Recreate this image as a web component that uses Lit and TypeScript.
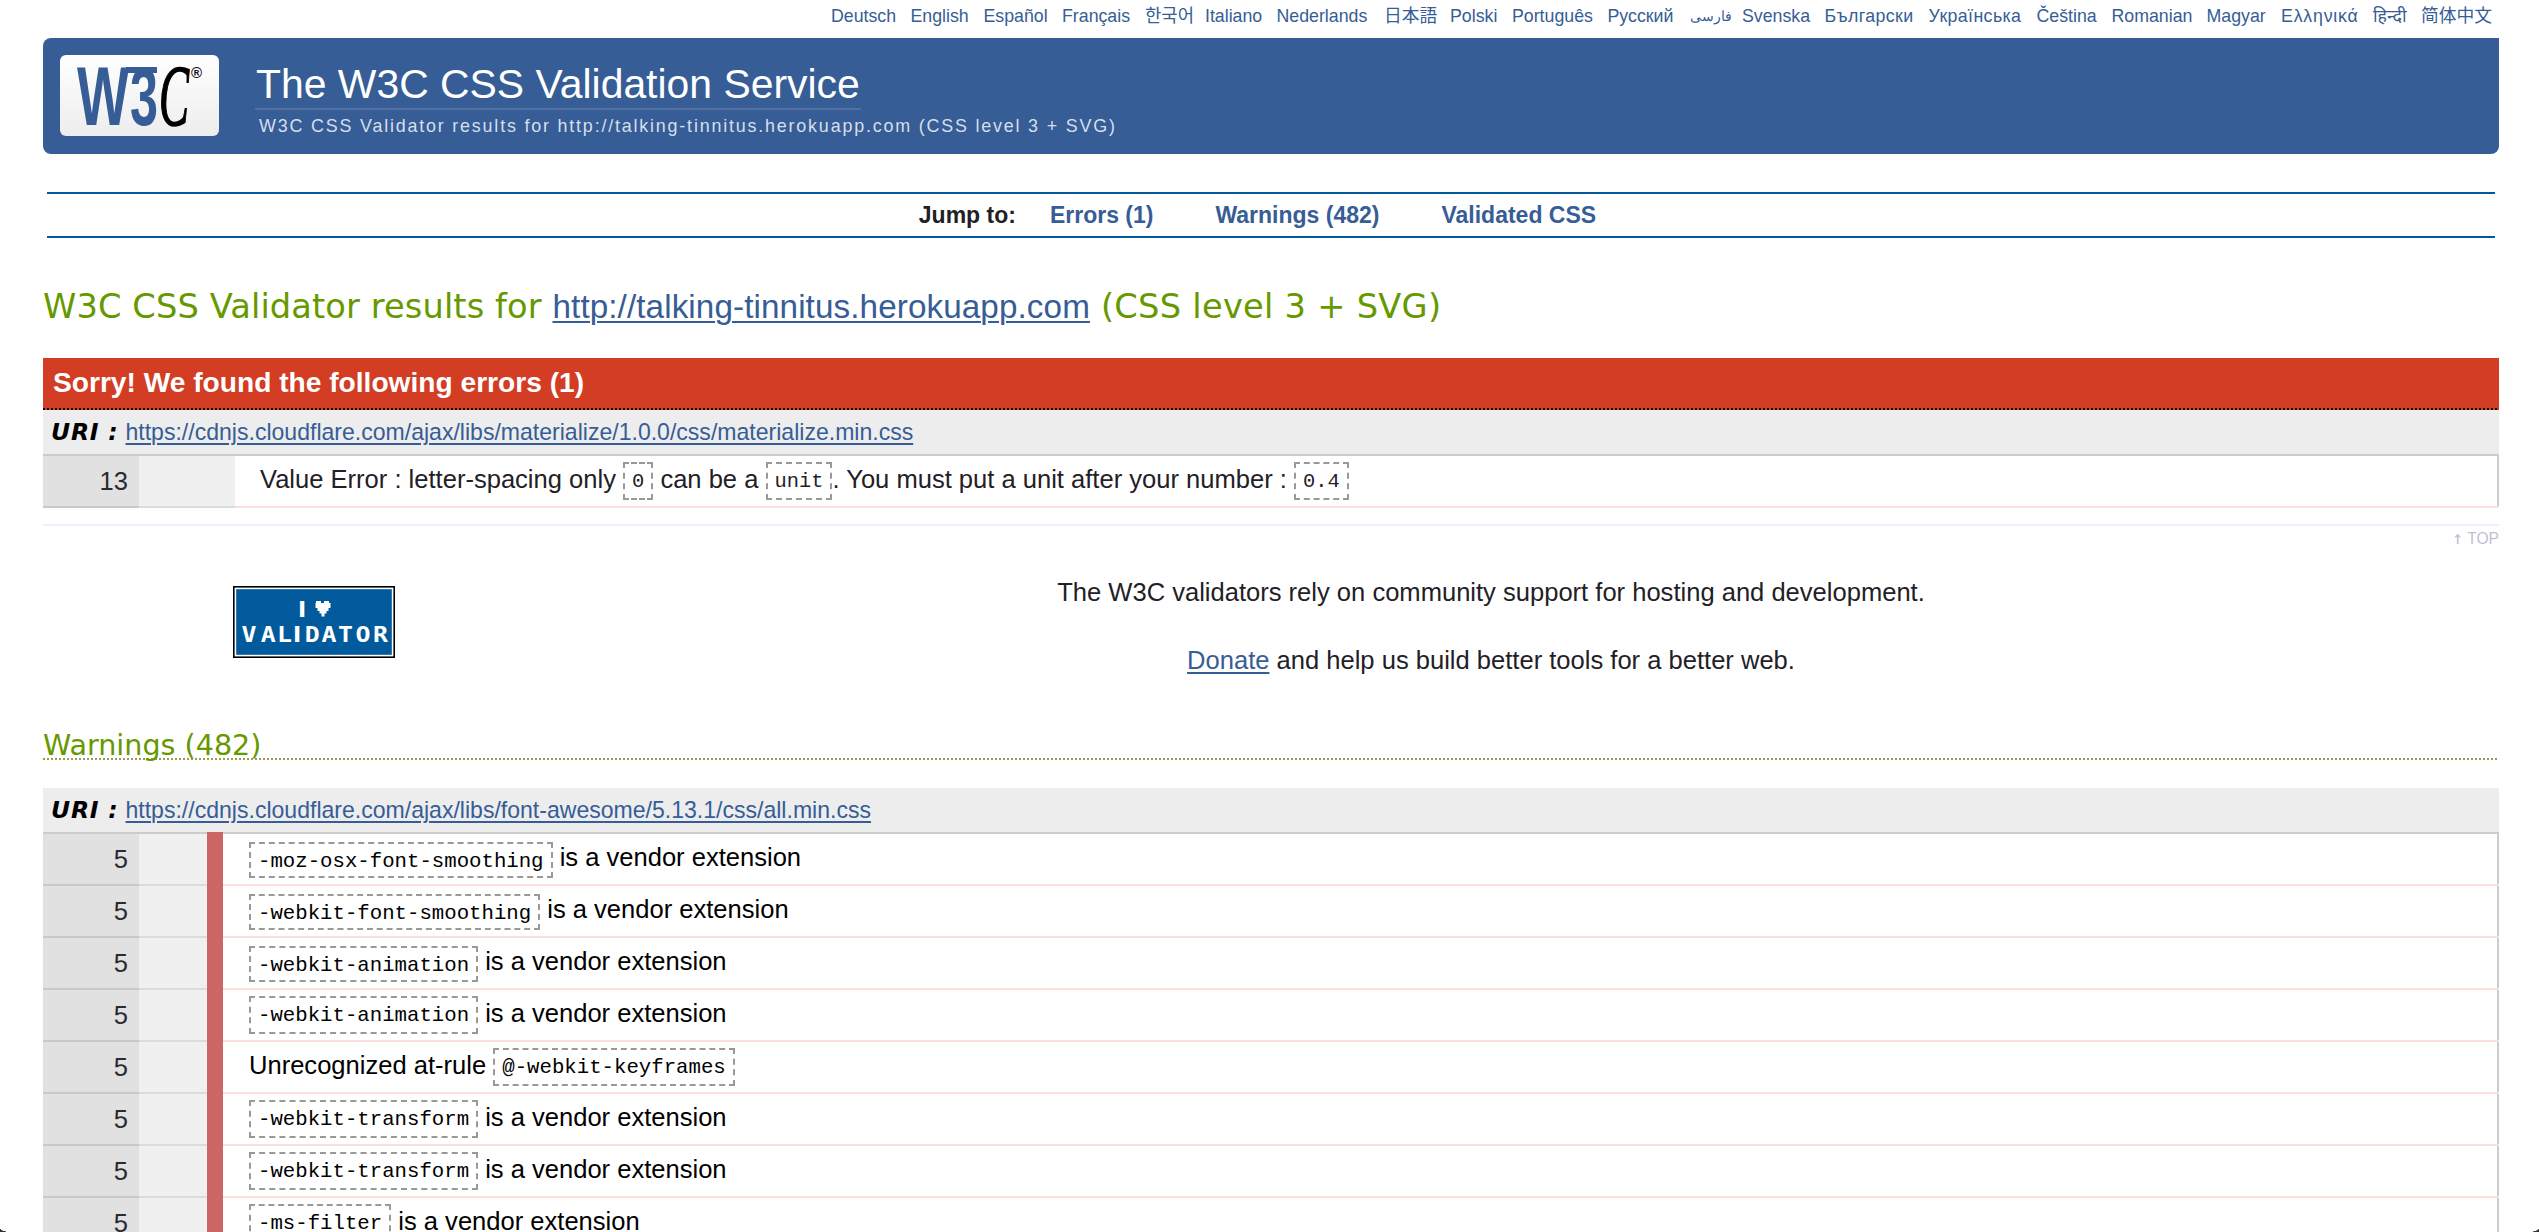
import { LitElement, html, css, svg } from "lit";
import { customElement, property } from "lit/decorators.js";
import { classMap } from "lit/directives/class-map.js";

/** Label, the width of its slot in the language bar, and an optional script class. */
const LANGUAGES: [string, number, string?][] = [
  ["Deutsch", 79.5], ["English", 73], ["Español", 78.5], ["Français", 83],
  ["한국어", 60], ["Italiano", 71.5], ["Nederlands", 107.5], ["日本語", 66],
  ["Polski", 62], ["Português", 95.5], ["Русский", 82.5], ["فارسی", 52, "arabic"],
  ["Svenska", 82.5], ["Български", 104, "wide"], ["Українська", 108, "wide"], ["Čeština", 75],
  ["Romanian", 95], ["Magyar", 74.5], ["Ελληνικά", 92, "wider"], ["हिन्दी", 48], ["简体中文", 72],
];

interface Warning {
  line: number;
  before?: string;
  code: string;
  after?: string;
  low?: boolean;
}

const VENDOR = " is a vendor extension";
const WARNINGS: Warning[] = [
  { line: 5, code: "-moz-osx-font-smoothing", after: VENDOR, low: true },
  { line: 5, code: "-webkit-font-smoothing", after: VENDOR, low: true },
  { line: 5, code: "-webkit-animation", after: VENDOR, low: true },
  { line: 5, code: "-webkit-animation", after: VENDOR },
  { line: 5, before: "Unrecognized at-rule ", code: "@-webkit-keyframes" },
  { line: 5, code: "-webkit-transform", after: VENDOR },
  { line: 5, code: "-webkit-transform", after: VENDOR },
  { line: 5, code: "-ms-filter", after: VENDOR },
];

@customElement("w3c-logo")
export class W3cLogo extends LitElement {
  static styles = css`
    :host { display: block; width: 159px; height: 81px; }
    .logo { display: block; }
    .w { font: 700 83px "Liberation Sans", sans-serif; fill: #365d95; }
    .three { font: 700 82px "Liberation Sans", sans-serif; fill: #365d95; }
    .c { font: italic 400 86px "Liberation Serif", serif; fill: #000; stroke: #000; stroke-width: 1.6; }
    .r { font: 700 15px "Liberation Sans", sans-serif; fill: #111; }
  `;
  render() {
    return html`<svg class="logo" width="159" height="81" viewBox="0 0 159 81" role="img" aria-label="W3C">
      <defs>
        <linearGradient id="plate" x1="0" y1="0" x2="0" y2="1">
          <stop offset="0" stop-color="#fff" /><stop offset="1" stop-color="#ededed" />
        </linearGradient>
      </defs>
      <rect width="159" height="81" rx="6" fill="url(#plate)" />
      <text class="w" x="17" y="70" textLength="52" lengthAdjust="spacingAndGlyphs">W</text>
      <text class="three" x="70" y="70" textLength="28" lengthAdjust="spacingAndGlyphs">3</text>
      <rect x="66" y="12" width="31" height="6" fill="#365d95" />
      <text class="c" x="99" y="70" textLength="30" lengthAdjust="spacingAndGlyphs">C</text>
      <text class="r" x="131" y="23">®</text>
    </svg>`;
  }
}

@customElement("validator-badge")
export class ValidatorBadge extends LitElement {
  static styles = css`
    :host { display: block; width: 162px; height: 72px; }
    .badge { display: block; }
    .pix { font: 700 22px "DejaVu Sans Mono", monospace; fill: #fff; text-anchor: middle; }
    .bar { font: 700 22px "DejaVu Sans", sans-serif; fill: #fff; text-anchor: middle; }
  `;
  render() {
    const word = [..."VALIDATOR"];
    const centers = [16, 35.2, 51.5, 64.2, 79.2, 96, 112.5, 130, 147.5];
    return html`<svg class="badge" width="162" height="72" viewBox="0 0 162 72">
      <rect width="162" height="72" fill="#000" />
      <rect x="1.6" y="1.6" width="158.8" height="68.8" fill="#fff" />
      <rect x="3.2" y="3.2" width="155.6" height="65.6" fill="#005a9c" />
      <text class="bar" x="69" y="31">I</text>
      <path fill="#fff" d="M83 15h5v2h3v-2h5v2h1.500v5h-2v3h-2v2.500h-2v3h-3v-3h-2v-2.500h-2v-3h-2v-5h0.500z" />
      ${word.map((ch, i) => ch === "I"
        ? svg`<text class="bar" x=${centers[i]} y="56">${ch}</text>`
        : svg`<text class="pix" x=${centers[i]} y="56" textLength="15" lengthAdjust="spacingAndGlyphs">${ch}</text>`)}
    </svg>`;
  }
}

@customElement("result-row")
export class ResultRow extends LitElement {
  @property({ type: Number }) line = 0;
  @property({ type: Boolean }) warning = false;

  static styles = css`
    :host { display: grid; grid-template-columns: 96px 96px 1fr; height: 52px; }
    :host([warning]) { grid-template-columns: 96px 68px 16px 1fr; color: #000; }
    .num { box-sizing: border-box; background: #e1e1e1; border-bottom: 2px solid #c8c8c8; text-align: right;
      padding-right: 11px; line-height: 51px; color: #2a2b30; height: 52px; }
    .ctx { box-sizing: border-box; background: #f0f0f0; border-bottom: 2px solid #dcdcdc; }
    .stripe { background: #c66; margin-top: -2px; }
    .body { display: grid; grid-template-rows: 50px 2px; }
    .msg { display: flex; align-items: flex-start; white-space: pre; padding-left: 25px;
      border-right: 2px solid #ccc; line-height: 47px; }
    :host([warning]) .msg { padding-left: 26px; }
    .rule { background: #fdd; }
  `;
  render() {
    return html`<div class="num">${this.line}</div><div class="ctx"></div>
      ${this.warning ? html`<div class="stripe"></div>` : ""}
      <div class="body"><div class="msg"><slot></slot></div><div class="rule"></div></div>`;
  }
}

@customElement("app-root")
export class AppRoot extends LitElement {
  static styles = css`
    :host { display: block; position: relative; box-sizing: border-box; width: 100%; height: 1232px; overflow: hidden;
      background: #fff; padding: 0 40px 0 43px; color: #1f2126;
      font: 25.55px "Liberation Sans", "Noto Sans CJK SC", sans-serif; }
    a { color: #365d95; text-decoration-thickness: 2px; text-underline-offset: 3px; }
    .langs { display: flex; justify-content: flex-end; height: 38px; line-height: 32px; padding-right: 6px; }
    .langs a { flex: none; white-space: nowrap; font-size: 17.75px; text-decoration: none;
      font-family: "Liberation Sans", "Noto Sans CJK KR", "Noto Sans", sans-serif; }
    .langs .arabic { font-size: 14px; }
    .langs .wide { letter-spacing: .4px; }
    .langs .wider { letter-spacing: .8px; }
    .banner { display: flex; height: 116px; background: #365d95; border-radius: 8px 0 8px 8px; }
    .banner w3c-logo { margin: 17px 36px 0 17px; }
    .titles { padding-top: 22px; }
    .title { width: 604px; padding-left: 1px; padding-right: 1px; height: 48px; line-height: 48px; font-size: 40.9px; font-weight: 400;
      color: #fff; margin: 0; border-bottom: 2px solid #5070a2; white-space: nowrap; }
    .tagline { margin: 1px 0 0 4px; font-size: 17.9px; line-height: 30px; letter-spacing: 1.81px; color: #d5dfee; white-space: nowrap; }
    .jump { display: flex; box-sizing: border-box; margin: 38px 4px 0; height: 46px; line-height: 42px;
      border: 2px solid #005a9c; border-width: 2px 0; font-size: 23px; font-weight: 700; padding-left: 871.8px; }
    .jump a { text-decoration: none; margin-left: 62px; }
    .jump a:first-of-type { margin-left: 34px; }
    .green { font-family: "DejaVu Sans", sans-serif; color: #690; font-weight: 400; margin: 0; }
    .results { height: 120px; box-sizing: border-box; padding-top: 17px; line-height: 104px; font-size: 33.7px; letter-spacing: .09px; white-space: nowrap; }
    .results a { font: 33.25px "Liberation Sans", sans-serif; }
    .tail { letter-spacing: .25px; }
    .sorry { margin: 0; height: 52px; box-sizing: border-box; padding-left: 10px; line-height: 49px; font-size: 28.15px; color: #fff;
      background: repeating-linear-gradient(90deg, #000 0 2px, #d23d24 2px 4px) bottom / 100% 2px no-repeat #d23d24; }
    .uri { display: flex; height: 44px; line-height: 44px; background: #ededed; border-bottom: 2px solid #ccc; font-size: 23.05px; }
    .uri-label { width: 74.5px; padding-left: 8px; font: italic 700 23.5px "DejaVu Sans", sans-serif; line-height: 44px;
      color: #000; letter-spacing: .8px; white-space: nowrap; }
    code { flex: none; box-sizing: border-box; height: 38px; margin-top: 6px; padding: 0 7px; border: 2px dashed #999;
      font: 20.7px "Liberation Mono", monospace; line-height: 36px; }
    code.low { height: 36px; margin-top: 8px; }
    code.short { font-size: 20.4px; line-height: 36px; }
    .top { margin-top: 16px; border-top: 2px solid #eef; text-align: right; font-size: 15.6px; line-height: 25px; height: 25px; color: #bfc0d6; }
    .arrow { font-family: "DejaVu Sans Mono", monospace; font-size: 18px; line-height: 1; }
    .support { display: flex; height: 175px; padding-left: 190px; }
    .support validator-badge { margin: 35px 0 0; }
    .plea { flex: none; width: 2192px; text-align: center; padding-top: 7px; line-height: 68px; }
    .plea p { margin: 0; }
    .warnings { height: 32px; box-sizing: border-box; line-height: 34px; font-size: 28.6px; margin: 2px 0 28px;
      background: repeating-linear-gradient(90deg, #9a9a52 0 2px, transparent 2px 4px) bottom / 100% 2px no-repeat; }
    .corner { position: absolute; bottom: 0; width: 10px; height: 5px; }
    .corner.left { left: 0; background: radial-gradient(ellipse 11px 5px at 100% 0, transparent 96%, #333 100%); }
    .corner.right { right: 0; background: radial-gradient(ellipse 11px 5px at 0 0, transparent 96%, #333 100%); }
  `;

  private uri(url: string) {
    return html`<div class="uri"><span class="uri-label">URI :</span><a href="#">${url}</a></div>`;
  }

  render() {
    return html`
      <nav class="langs">
        ${LANGUAGES.map(([name, w, cls]) => html`<a class=${cls ?? "latin"} style="width:${w}px" href="#">${name}</a>`)}
      </nav>
      <header class="banner">
        <w3c-logo></w3c-logo>
        <div class="titles">
          <h1 class="title">The W3C CSS Validation Service</h1>
          <p class="tagline">W3C CSS Validator results for http://talking-tinnitus.herokuapp.com (CSS level 3 + SVG)</p>
        </div>
      </header>
      <nav class="jump">
        <span>Jump to:</span><a href="#">Errors (1)</a><a href="#">Warnings (482)</a><a href="#">Validated CSS</a>
      </nav>
      <h2 class="green results">W3C CSS Validator results for <a href="#">http://talking-tinnitus.herokuapp.com</a><span class="tail"> (CSS level 3 + SVG)</span></h2>
      <h3 class="sorry">Sorry! We found the following errors (1)</h3>
      ${this.uri("https://cdnjs.cloudflare.com/ajax/libs/materialize/1.0.0/css/materialize.min.css")}
      <result-row .line=${13}><span>Value Error : letter-spacing only </span><code class="short">0</code><span> can be a </span><code class="short">unit</code><span>. You must put a unit after your number : </span><code class="short">0.4</code></result-row>
      <div class="top"><span class="arrow">↑</span> TOP</div>
      <section class="support">
        <validator-badge></validator-badge>
        <div class="plea">
          <p>The W3C validators rely on community support for hosting and development.</p>
          <p><a href="#">Donate</a> and help us build better tools for a better web.</p>
        </div>
      </section>
      <h3 class="green warnings">Warnings (482)</h3>
      ${this.uri("https://cdnjs.cloudflare.com/ajax/libs/font-awesome/5.13.1/css/all.min.css")}
      ${WARNINGS.map((w) => html`<result-row warning .line=${w.line}>${w.before ? html`<span>${w.before}</span>` : ""}<code class=${classMap({ low: !!w.low })}>${w.code}</code>${w.after ? html`<span>${w.after}</span>` : ""}</result-row>`)}
      <i class="corner left"></i><i class="corner right"></i>
    `;
  }
}
